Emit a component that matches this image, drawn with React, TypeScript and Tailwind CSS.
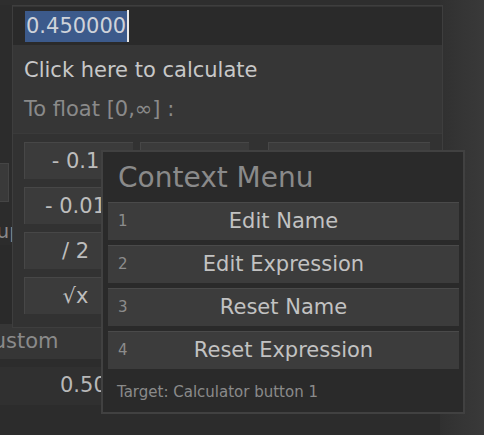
import React from 'react';

const font = { fontFamily: '"DejaVu Sans", "Liberation Sans", sans-serif' };

const menuItems = ['Edit Name', 'Edit Expression', 'Reset Name', 'Reset Expression'];

const calcRows: string[][] = [
  ['- 0.1', '+ 0.1', 'x 2'],
  ['- 0.01', '+ 0.01', 'x 10'],
  ['/ 2', '* 2', '1 / x'],
  ['√x', 'x²', 'round'],
];

const CalcButton: React.FC<{ label: string; wide?: boolean }> = ({ label, wide }) => (
  <div
    className={`${wide ? 'w-[162px] ml-[12px]' : 'w-[109px]'} h-[37px] flex items-center justify-center pr-[7px] bg-[#3b3b3b] border-t border-l border-[#474747] text-[21px] text-[#bdbdbd] leading-none whitespace-nowrap`}
  >
    {label}
  </div>
);

export default function App() {
  return (
    <div className="relative w-[484px] h-[435px] overflow-hidden bg-[#2c2c2c]" style={font}>
      {/* main window behind the popups */}
      <div className="flex h-full">
        <div className="w-[440px] h-full flex flex-col">
          <div className="h-[5px] bg-[#2e2e2e]" />
          <div className="w-[101px] overflow-hidden flex flex-col pt-[158px]">
            <div className="w-[9px] h-[39px] bg-[#3a3a3a] border border-l-0 border-[#454545]" />
            <div className="h-[20px] mt-[19px] ml-[-39px] text-[20px] leading-[20px] text-[#8a8a8a] whitespace-nowrap">
              Group
            </div>
            <div className="w-[12px] h-[80px] mt-[4px] bg-[#2a2a2a]" />
            <div className="h-[35px] mt-[-1px] bg-[#363636] flex items-center ml-[-23px] pl-[1px] text-[21px] text-[#8a8a8a] whitespace-nowrap">
              Custom
            </div>
            <div className="h-[38px] mt-[8px] bg-[#303030] flex items-center pl-[60px] text-[21px] text-[#b8b8b8] whitespace-nowrap">
              0.500000
            </div>
          </div>
        </div>
        <div className="flex-1 h-full bg-gradient-to-r from-[#303030] via-[#353535] to-[#393939]" />
      </div>

      {/* calculator popup */}
      <div className="absolute left-[12px] top-[5px] w-[431px] h-[323px] bg-[#363636] border border-[#3e3e3e] flex flex-col">
        <div className="h-[38px] mt-[1px] bg-[#2a2a2a] flex items-center pl-[12px]">
          <span className="bg-[#3c5a8b] text-[21px] leading-[31px] text-[#cfd3da] px-[1px]">0.450000</span>
          <span className="w-[2px] h-[32px] bg-[#e8e8e8]" />
        </div>
        <div className="pl-[11px] mt-[13px] text-[21px] leading-[25px] text-[#c8c8c8]">Click here to calculate</div>
        <div className="pl-[11px] mt-[14px] text-[21px] leading-[25px] text-[#8a8a8a]">To float [0,∞] :</div>
        <div className="mt-[11px] flex-1 bg-[#323232] border-t border-[#3a3a3a] pl-[11px] pt-[8px] flex flex-col gap-[8px]">
          {calcRows.map((row, i) => (
            <div key={i} className="flex gap-[7px]">
              <CalcButton label={row[0]} />
              <CalcButton label={row[1]} />
              <CalcButton label={row[2]} wide />
            </div>
          ))}
        </div>
      </div>

      {/* context menu */}
      <div className="absolute left-[101px] top-[150px] w-[364px] h-[264px] bg-[#2a2a2a] border-2 border-[#414141] flex flex-col pl-[5px] pr-[4px]">
        <div className="h-[50px] pt-[2px] flex items-center pl-[10px] text-[28px] text-[#8a8a8a] leading-none">Context Menu</div>
        <div className="flex flex-col gap-[5px]">
          {menuItems.map((item, i) => (
            <div
              key={item}
              className="h-[38px] grid grid-cols-[40px_1fr_40px] items-center bg-[#3c3c3c] border-t border-[#4a4a4a]"
            >
              <span className="pl-[10px] text-[15px] text-[#8c8c8c]">{i + 1}</span>
              <span className="text-center text-[21px] text-[#c2c2c2] whitespace-nowrap">{item}</span>
              <span />
            </div>
          ))}
        </div>
        <div className="mt-[14px] pl-[9px] text-[15px] leading-[18px] text-[#8a8a8a]">Target: Calculator button 1</div>
      </div>
    </div>
  );
}
